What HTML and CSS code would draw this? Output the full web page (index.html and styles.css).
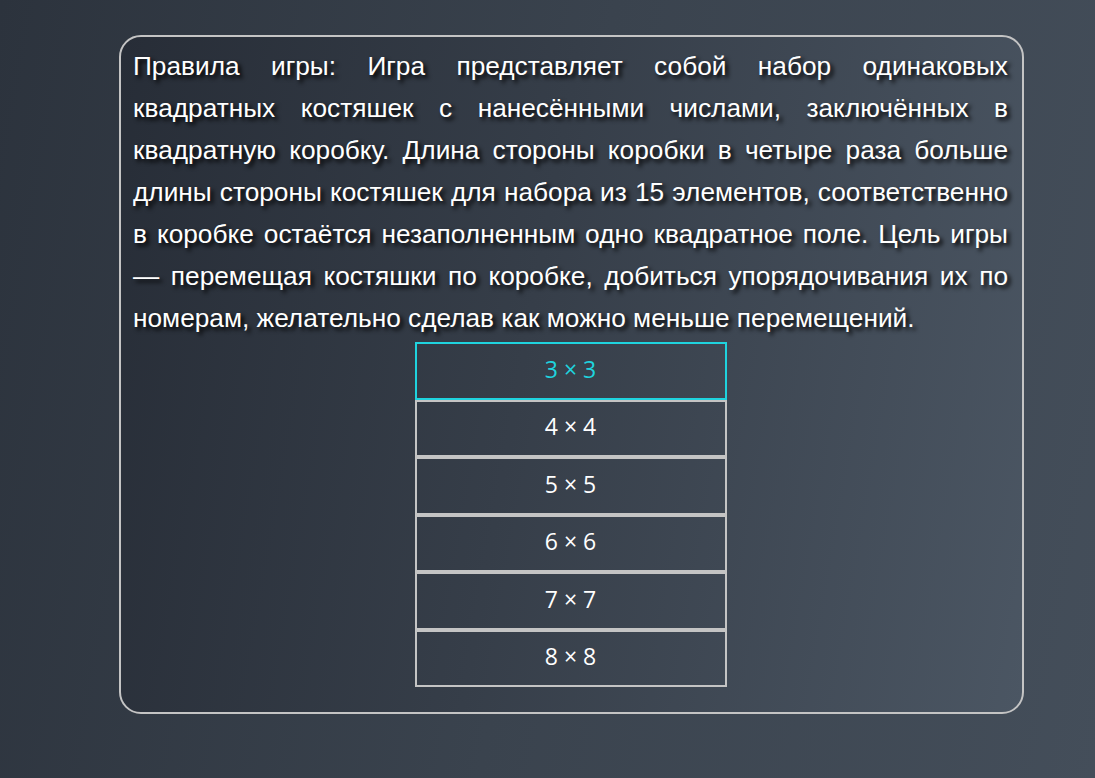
FILE: index.html
```html
<!DOCTYPE html>
<html lang="ru">
<head>
<meta charset="utf-8">
<title>Пятнашки</title>
<link rel="stylesheet" href="styles.css">
</head>
<body>
<main class="card">
  <p class="rules">Правила игры: Игра представляет собой набор одинаковых квадратных костяшек с нанесёнными числами, заключённых в квадратную коробку. Длина стороны коробки в четыре раза больше длины стороны костяшек для набора из 15 элементов, соответственно в коробке остаётся незаполненным одно квадратное поле. Цель игры — перемещая костяшки по коробке, добиться упорядочивания их по номерам, желательно сделав как можно меньше перемещений.</p>
  <div class="sizes">
    <button class="size active">3 × 3</button>
    <button class="size">4 × 4</button>
    <button class="size">5 × 5</button>
    <button class="size">6 × 6</button>
    <button class="size">7 × 7</button>
    <button class="size">8 × 8</button>
  </div>
</main>
</body>
</html>
```

FILE: styles.css
```css
html, body {
  margin: 0;
  height: 100%;
}
body {
  background: linear-gradient(100deg, #2c333d 0%, #3a434e 50%, #444e5a 100%);
  font-family: "Liberation Sans", Arial, sans-serif;
  padding: 35px 0 0 119px;
  box-sizing: border-box;
}
.card {
  box-sizing: border-box;
  width: 905px;
  height: 679px;
  border: 2px solid #c4c4c4;
  border-radius: 22px;
  background: linear-gradient(100deg, #272d37 0%, #363e49 45%, #4b5663 100%);
  padding: 8px 14px 0 12px;
}
.rules {
  margin: 0;
  color: #ffffff;
  font-size: 26.25px;
  line-height: 42px;
  text-align: justify;
  text-shadow: 3px 3px 4px #000;
}
.sizes {
  display: flex;
  flex-direction: column;
  width: 312px;
  margin: 3px auto 0;
}
.size {
  box-sizing: border-box;
  height: 57.5px;
  background: transparent;
  border: 2px solid #c4c4c4;
  color: #ffffff;
  font-family: "Open Sans", "Noto Sans", sans-serif;
  font-size: 23px;
  padding: 0 0 4px;
  cursor: pointer;
}
.size.active {
  border-color: #1fd3de;
  color: #1fd3de;
}
```
